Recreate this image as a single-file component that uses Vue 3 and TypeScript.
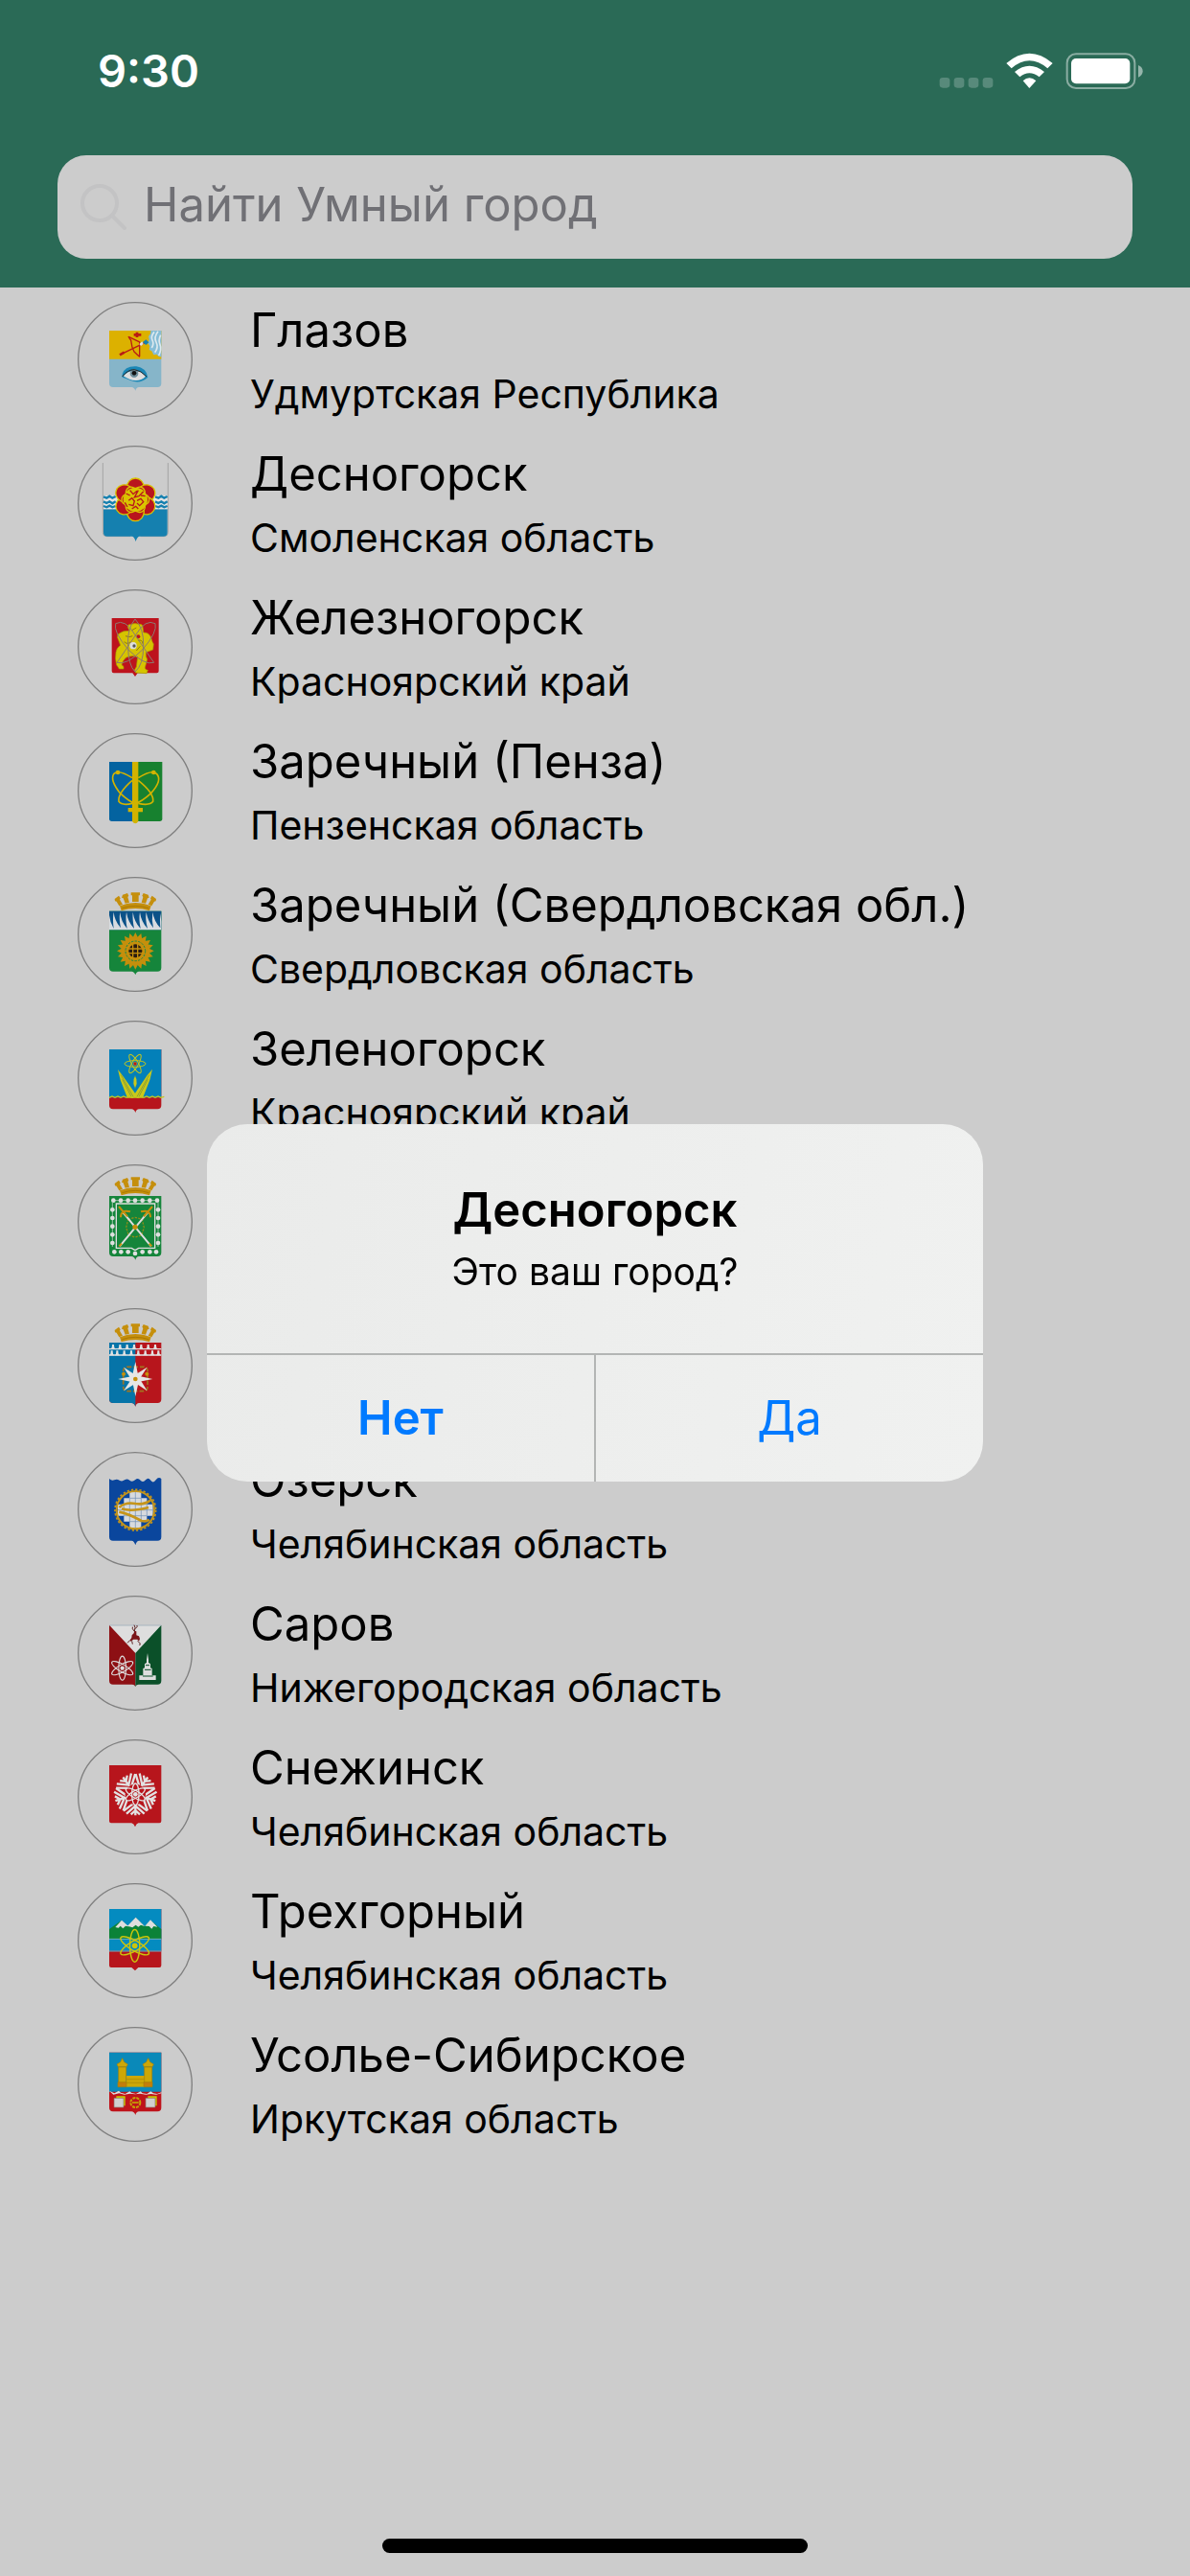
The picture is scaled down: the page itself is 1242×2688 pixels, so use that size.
<script setup lang="ts">
import { ref } from 'vue'

interface City {
  name: string
  region: string
  coat: string
}

const cities: City[] = [
  { name: 'Глазов', region: 'Удмуртская Республика', coat: 'glazov' },
  { name: 'Десногорск', region: 'Смоленская область', coat: 'desnogorsk' },
  { name: 'Железногорск', region: 'Красноярский край', coat: 'zheleznogorsk' },
  { name: 'Заречный (Пенза)', region: 'Пензенская область', coat: 'zarechny-penza' },
  { name: 'Заречный (Свердловская обл.)', region: 'Свердловская область', coat: 'zarechny-ural' },
  { name: 'Зеленогорск', region: 'Красноярский край', coat: 'zelenogorsk' },
  { name: 'Лесной', region: 'Свердловская область', coat: 'lesnoy' },
  { name: 'Новоуральск', region: 'Свердловская область', coat: 'novouralsk' },
  { name: 'Озерск', region: 'Челябинская область', coat: 'ozersk' },
  { name: 'Саров', region: 'Нижегородская область', coat: 'sarov' },
  { name: 'Снежинск', region: 'Челябинская область', coat: 'snezhinsk' },
  { name: 'Трехгорный', region: 'Челябинская область', coat: 'trekhgorny' },
  { name: 'Усолье-Сибирское', region: 'Иркутская область', coat: 'usolye' },
]

const query = ref('')
const confirmOpen = ref(true)

// Evenly spaced angles for the rotated parts of the coats of arms
const turns = (count: number): number[] =>
  Array.from({ length: count }, (_, i) => (360 / count) * i)

// Shield outline with rounded bottom corners and a small point
const shield = (top: number, bottom: number): string =>
  `M99 ${top}H262V${bottom - 12}q0 12 -12 12H192q-8 0 -11 11q-4 -11 -12 -11H111q-12 0 -12 -12Z`
</script>

<template>
  <div class="screen">
    <svg class="defs" aria-hidden="true">
      <symbol id="crown" viewBox="0 0 360 360">
        <g fill="#c58f0c">
          <path d="M132 91q49 -20 98 0l-5 15q-44 -14 -88 0Z" />
          <path d="M167 49h28v9h-4v20h-20v-20h-4Z" />
          <path d="M141 56l15 -5 4 8 -3 4 5 17 -13 3 -6 -16 -5 -2Z" />
          <path d="M221 56l-15 -5 -4 8 3 4 -5 17 13 3 6 -16 5 -2Z" />
          <path d="M116 69l13 -10 5 8 -2 4 9 15 -11 5 -8 -14 -5 -1Z" />
          <path d="M246 69l-13 -10 -5 8 2 4 -9 15 11 5 8 -14 5 -1Z" />
        </g>
        <path d="M139 98q42 -14 84 0" fill="none" stroke="#9a6c00" stroke-width="2" />
      </symbol>
      <symbol id="atom" viewBox="-50 -50 100 100">
        <g fill="none" stroke="currentColor" stroke-width="4">
          <ellipse rx="14" ry="46" />
          <ellipse rx="14" ry="46" transform="rotate(60)" />
          <ellipse rx="14" ry="46" transform="rotate(120)" />
        </g>
        <circle r="8" fill="currentColor" />
      </symbol>
    </svg>

    <header class="header">
      <div class="status">
        <time class="clock">9:30</time>
        <svg class="indicators" viewBox="238 104 640 114" aria-hidden="true">
          <g fill="#fff" fill-opacity=".22">
            <rect v-for="i in 4" :key="i" :x="194 + i * 45" y="182" width="32" height="32" rx="10" />
          </g>
          <g fill="#fff">
            <path d="M448 137Q520 76 593 137L577 153Q520 105 464 153Z" />
            <path d="M474 164Q520 126 567 164L551 180Q520 155 490 180Z" />
            <path d="M500 192Q520 174 541 192L520 215Z" />
          </g>
          <rect x="638" y="108" width="212" height="107" rx="28" fill="none" stroke="#fff" stroke-opacity=".45" stroke-width="6" />
          <rect x="651" y="122" width="184" height="79" rx="15" fill="#fff" />
          <path d="M861 143q14 6 14 19t-14 19Z" fill="#fff" fill-opacity=".5" />
        </svg>
      </div>
      <label class="search">
        <svg class="search-icon" viewBox="0 0 48 48" aria-hidden="true">
          <circle cx="20" cy="20" r="18" />
          <path d="M33 33L46 46" />
        </svg>
        <input v-model="query" type="text" placeholder="Найти Умный город" aria-label="Найти Умный город" />
      </label>
    </header>

    <ul class="cities">
      <li v-for="city in cities" :key="city.name" class="city">
        <svg class="coat" viewBox="0 0 360 360" aria-hidden="true">
          <circle cx="180" cy="180" r="178" fill="none" stroke="#808080" stroke-width="4" />

          <g v-if="city.coat === 'glazov'">
            <path :d="shield(90, 267)" fill="#86b5c9" />
            <path d="M99 90H262V179H99Z" fill="#dcb100" />
            <path d="M229 90H262V172H255l-8 -8 -9 2 -6 -12 -8 -4 2 -12 -6 -8 4 -12 -2 -10 6 -8Z" fill="#86bdd6" />
            <path d="M240 94q-12 14 -6 26t-2 24M252 92q-14 18 -6 34t-4 32M260 104q-8 16 -2 30t-4 34" fill="none" stroke="#dde9ef" stroke-width="5" />
            <g fill="none" stroke="#b91c14" stroke-width="4">
              <path d="M159 108q4 8 8 12q2 22 10 36q12 12 18 16M161 110L194 126V170M136 164L212 127" />
              <path d="M186 95v16M176 103h23" stroke-width="8" />
              <path d="M132 166l14 -8" stroke-width="8" />
            </g>
            <path d="M204 126l10 -8 9 9 -9 8Z" fill="#1580ae" />
            <path d="M193 132l9 -8 4 8 -8 6Z" fill="#e4e4e4" />
            <path d="M140 226q8 -26 44 -24q30 4 36 34q-24 22 -54 10q-16 -8 -26 -10Z" fill="#1b87b6" />
            <path d="M143 232q14 -16 36 -17q22 2 34 18q-14 14 -32 13q-18 0 -38 -14Z" fill="#dedede" />
            <circle cx="177" cy="224" r="13" fill="#6f8e9a" />
            <circle cx="177" cy="223" r="7" fill="#111" />
            <path d="M140 234q16 -22 38 -22q20 2 38 22" fill="none" stroke="#222" stroke-width="3" />
          </g>

          <g v-else-if="city.coat === 'desnogorsk'">
            <path d="M79 54V272q0 12 12 12H165M283 54V272q0 12 -12 12H197" fill="none" stroke="#a4a4a4" stroke-width="3" />
            <path d="M81 199H281V272q0 12 -12 12H193q-7 2 -11 16q-4 -14 -11 -16H93q-12 0 -12 -12Z" fill="#1580af" />
            <path d="M81 156H281V199H81Z" fill="#e4e4e4" />
            <g fill="none" stroke="#1580af" stroke-width="7">
              <path d="M81 160l10 4 9 -6 9 6 10 -5M81 175l10 5 9 -5 9 6 10 -6M81 189l10 4 9 -5 9 5 10 -4" />
              <path d="M243 160l10 4 9 -6 9 6 10 -5M243 175l10 5 9 -5 9 6 10 -6M243 189l10 4 9 -5 9 5 10 -4" />
            </g>
            <g fill="#b9151d" stroke="#d9c400" stroke-width="4">
              <ellipse v-for="a in turns(6)" :key="a" cx="181" cy="131" rx="27" ry="29" :transform="`rotate(${a} 181 169)`" />
              <ellipse v-for="a in turns(6)" :key="a + 500" cx="181" cy="141" rx="16" ry="15" :transform="`rotate(${a + 30} 181 169)`" />
            </g>
            <circle cx="181" cy="169" r="38" fill="#d9c400" />
            <path d="M152 150l12 6M164 140l10 12 12 -10M190 140l-12 22 14 -4 14 -14M160 172l10 -8 8 10 -4 14 -14 -4M186 172l12 -6 8 10 -12 12 -8 -8M170 198l12 -8 8 8M198 156l14 2M148 178l8 14" fill="none" stroke="#b9151d" stroke-width="4" />
          </g>

          <g v-else-if="city.coat === 'zheleznogorsk'">
            <path d="M107 90H254V256q0 6 -6 6H188l-8 11 -8 -11H113q-6 0 -6 -6Z" fill="#bd131d" />
            <path d="M157 118q0 -10 10 -8q12 -6 24 -1q12 -2 13 8l2 18q18 0 24 16q4 16 8 20l-2 18 -22 8q-2 14 4 22l-6 22q-4 10 8 12l-4 10 -34 -2q-8 -8 2 -18l4 -32q-18 -6 -36 2q-12 10 -14 24q8 2 6 12h-14q-4 -8 -8 -12q-6 -20 -2 -40q2 -14 14 -22l-6 -16q-6 -8 -2 -18q16 -14 37 -11Z" fill="#d6c400" stroke="#a59a00" stroke-width="2" />
            <path d="M150 146q12 6 22 0M146 164q10 10 20 0M190 160q12 -4 14 10M170 128l14 -8M196 178l-12 14" fill="none" stroke="#8e7c10" stroke-width="3" />
            <circle cx="190" cy="148" r="6" fill="#bd131d" />
            <g fill="none" stroke="#8c7a70" stroke-width="3">
              <path d="M119 107q30 -16 60 34q40 60 60 88q-30 10 -80 -40q-48 -56 -40 -82Z" />
              <path d="M243 107q-30 -16 -60 34q-40 60 -60 88q30 10 80 -40q48 -56 40 -82Z" />
              <path d="M180 93q-26 30 -22 84q0 60 22 81q26 -21 26 -81q2 -54 -26 -84Z" />
            </g>
            <circle cx="174" cy="176" r="11" fill="#ddd" /><circle cx="177" cy="177" r="5" fill="#555" />
          </g>

          <g v-else-if="city.coat === 'zarechny-penza'">
            <path d="M99 90H180V276H107q-8 0 -8 -8Z" fill="#0463a0" />
            <path d="M180 90H265V268q0 8 -8 8H180Z" fill="#17812f" />
            <path d="M171 90H190V234H204V247H190V276q-9 14 -19 0V247H158V234H171Z" fill="#d2b300" />
            <g fill="none" stroke="#d2b300" stroke-width="5">
              <path d="M171 140q-44 -28 -58 -12q-12 20 20 60q30 28 47 32M171 148q-46 40 -42 66q10 14 42 6" />
              <path d="M190 140q44 -28 58 -12q18 20 -18 60q-30 28 -50 32M190 148q50 40 46 66q-10 14 -46 6" />
            </g>
            <circle cx="126" cy="123" r="7" fill="#d2b300" /><circle cx="238" cy="123" r="7" fill="#d2b300" />
          </g>

          <g v-else-if="city.coat === 'zarechny-ural'">
            <use href="#crown" width="360" height="360" />
            <path :d="shield(107, 296)" fill="#15853b" />
            <path d="M99 107H262V166H99Z" fill="#0b5288" />
            <path d="M99 166V120q2 20 14 42q-4 -30 0 -52q2 26 22 50q-6 -28 -2 -50q2 28 22 52q-6 -30 -2 -52q4 30 24 52q-6 -30 -4 -52q4 30 24 52q-6 -30 -2 -52q4 30 24 52q-8 -30 -4 -52q4 26 22 50q-6 -26 -2 -50q4 28 24 50q-2 -30 0 -46q2 20 3 26V166Z" fill="#d8dce0" />
            <g fill="#c58f0c">
              <path v-for="a in turns(20)" :key="a" d="M172 192L181 174L190 192Z" :transform="`rotate(${a} 181 232)`" />
              <circle cx="181" cy="232" r="43" />
            </g>
            <circle cx="181" cy="232" r="31" fill="none" stroke="#158a4b" stroke-width="3" stroke-dasharray="7 4" />
            <circle cx="181" cy="232" r="21" fill="#2a1c10" />
            <path d="M158 225h46M158 239h46M173 209v46M188 209v46" stroke="#c58f0c" stroke-width="4" />
          </g>

          <g v-else-if="city.coat === 'zelenogorsk'">
            <path :d="shield(90, 277)" fill="#b7151c" />
            <path d="M99 90H262V241H99Z" fill="#0380b9" />
            <path d="M99 241l9 -4 9 4 9 -4 9 4 9 -4 9 4 9 -4 9 4 9 -4 9 4 9 -4 9 4 9 -4 9 4 9 -4 9 4 9 -4 9 4 10 -3" fill="none" stroke="#c9c81a" stroke-width="4" />
            <path d="M126 153l14 18 40 56 38 -56 16 -19 -8 34 -22 56H156l-22 -56Z" fill="#c9c81a" />
            <path d="M180 170q-8 14 -6 28l6 16 6 -16q2 -14 -6 -28Z" fill="#c9c81a" stroke="#0380b9" stroke-width="2" />
            <path d="M136 170l38 68M140 184l28 54M224 170l-38 68M220 184l-28 54" stroke="#718f3e" stroke-width="2" />
            <use href="#atom" x="144" y="99" width="72" height="72" color="#c9c81a" transform="rotate(30 180 135)" />
            <circle cx="180" cy="135" r="5" fill="#b7151c" />
          </g>

          <g v-else-if="city.coat === 'lesnoy'">
            <use href="#crown" y="-9" width="360" height="360" />
            <path :d="shield(99, 288)" fill="#15853b" />
            <path d="M121 123H242V262H191l-11 7 -11 -7H121Z" fill="none" stroke="#dedede" stroke-width="4" />
            <g fill="#e0e0e0">
              <circle v-for="x in [112, 135, 158, 180, 203, 226, 249]" :key="x" :cx="x" cy="113" r="7" />
              <circle v-for="x in [115, 136, 158, 180, 203, 226, 246]" :key="x + 300" :cx="x" :cy="x === 180 ? 279 : 274" r="7" />
              <g v-for="y in [142, 168, 194, 220, 246]" :key="y">
                <circle cx="109" :cy="y" r="7" /><circle cx="252" :cy="y" r="7" />
              </g>
            </g>
            <path d="M109 120V258M252 120V258M112 113H249" stroke="#e0e0e0" stroke-width="2" />
            <path d="M158 172l22 -6 22 6 6 26 -8 24 -20 6 -20 -6 -8 -24Z" fill="none" stroke="#8c8d18" stroke-width="4" stroke-dasharray="7 4" />
            <path d="M142 150L230 256M220 150L132 256" stroke="#dedede" stroke-width="6" />
            <path d="M129 132L156 163M234 132L207 163M135 166q0 -12 6 -16q6 -6 24 -2M228 166q0 -12 -6 -16q-6 -6 -24 -2M224 248l8 8M138 248l-8 8" fill="none" stroke="#c58f0c" stroke-width="6" />
            <circle cx="180" cy="196" r="8" fill="#c58f0c" />
          </g>

          <g v-else-if="city.coat === 'novouralsk'">
            <use href="#crown" width="360" height="360" />
            <path :d="shield(108, 297)" fill="#b7151c" />
            <path d="M99 108H181V308q-4 -11 -12 -11H111q-12 0 -12 -12Z" fill="#0674a8" />
            <g fill="#e2e2e2">
              <path v-for="x in [103, 125, 147, 169, 191, 213, 235]" :key="x" :d="`M${x} 128q5 -2 5 -14h6q0 12 5 14Z`" />
              <path v-for="x in [99, 116, 138, 160, 182, 204, 226, 245]" :key="x + 400" :d="`M${x} 148q5 -2 5 -15h6q0 13 5 15Z`" />
              <path d="M99 126H262V130H99ZM99 145H262V149H99Z" />
            </g>
            <rect x="143" y="184" width="76" height="76" rx="12" fill="none" stroke="#a1741f" stroke-width="5" stroke-dasharray="14 6" />
            <g fill="#e6e6e6">
              <path v-for="a in turns(4)" :key="a" d="M171 213L181 168L190 213L181 222Z" :transform="`rotate(${a} 181 222)`" />
              <path v-for="a in turns(4)" :key="a + 45" d="M171 213L181 170L190 213L181 222Z" :transform="`rotate(${a + 45} 181 222)`" />
              <circle cx="181" cy="222" r="15" />
            </g>
            <circle cx="181" cy="222" r="7" fill="#c58f0c" /><circle cx="144" cy="206" r="6" fill="#c58f0c" /><circle cx="217" cy="206" r="6" fill="#c58f0c" />
          </g>

          <g v-else-if="city.coat === 'ozersk'">
            <path d="M99 84q8 8 16 4t16 1t16 -1t16 1t17 -1t17 1t16 -1t16 1t16 -1t17 -4V266q0 12 -12 12H193q-9 0 -12 14q-4 -14 -12 -14H111q-12 0 -12 -12Z" fill="#0a469d" />
            <path d="M163 125h36v20h18v19h19v36h-19v18h-18v21h-36v-21h-18v-18h-19v-36h19v-19h18Z" fill="#d7dade" />
            <path d="M126 182h110M145 164h72M145 200h72M163 145h36M163 218h36M181 125v114M163 145v75M199 145v75M145 164v36M217 164v36" stroke="#6c8cb4" stroke-width="2" />
            <circle cx="181" cy="182" r="59" fill="none" stroke="#c6951a" stroke-width="6" />
            <circle cx="181" cy="182" r="64" fill="none" stroke="#c6951a" stroke-width="5" stroke-dasharray="7 6" />
            <path d="M130 174q20 -18 52 -12q26 4 46 -10M138 178q30 10 84 -4M130 188q30 6 70 28q16 4 24 -4" fill="none" stroke="#c6951a" stroke-width="8" />
          </g>

          <g v-else-if="city.coat === 'sarov'">
            <path d="M99 92H262L181 184Z" fill="#dedede" />
            <path d="M99 92L181 180V285q-3 -7 -10 -7H111q-12 0 -12 -12Z" fill="#8d1014" />
            <path d="M262 92L181 180V285q3 -7 10 -7H250q12 0 12 -12Z" fill="#0b5029" />
            <path d="M99 93H262" stroke="#8ba0b0" stroke-width="2" />
            <path d="M170 124l6 -6 2 -8 6 2 0 12 8 3 3 8 -3 8 -5 -6 -12 0 -8 6 -4 -3 6 -8Z" fill="#7a1418" />
            <path d="M178 112l-6 -8v-6M178 112l2 -12 -3 -8M180 104l6 -6v-5M164 140l-8 8M170 142l2 10M188 142l8 8 -2 6" fill="none" stroke="#5a2020" stroke-width="3" />
            <use href="#atom" x="99" y="186" width="82" height="82" color="#dedede" />
            <path d="M219 180l3 20v10l6 4v12l5 2v22h12v14h-52v-14h12v-22l5 -2v-12l6 -4v-10Z" fill="#dedede" />
            <path d="M210 232h20M213 218h12M204 252h32" stroke="#0b5029" stroke-width="3" />
          </g>

          <g v-else-if="city.coat === 'snezhinsk'">
            <path d="M99 81H262V256q0 6 -6 6H190q-6 2 -10 12q-4 -10 -11 -12H105q-6 0 -6 -6Z" fill="#b7151c" />
            <g fill="none" stroke="#e2e2e2" stroke-width="7">
              <path v-for="a in turns(5)" :key="a" d="M181 194V238M181 222l-14 13M181 222l14 13M181 208l-28 25M181 208l28 25M181 196l-37 28M181 196l37 28" :transform="`rotate(${a} 181 172)`" />
            </g>
            <circle cx="181" cy="172" r="32" fill="#b7151c" />
            <g fill="none" stroke="#e2e2e2" stroke-width="4">
              <ellipse cx="181" cy="172" rx="11" ry="34" />
              <ellipse cx="181" cy="172" rx="11" ry="34" transform="rotate(60 181 172)" />
              <ellipse cx="181" cy="172" rx="11" ry="34" transform="rotate(120 181 172)" />
            </g>
            <circle cx="181" cy="172" r="7" fill="#e2e2e2" />
          </g>

          <g v-else-if="city.coat === 'trekhgorny'">
            <path d="M99 81H262V258q0 6 -6 6H190l-10 10 -11 -10H105q-6 0 -6 -6Z" fill="#b7151c" />
            <path d="M99 81H262V212H99Z" fill="#048bc0" />
            <path d="M99 144L136 118L158 136L182 108L210 136L228 116L262 144V175H99Z" fill="#0b8238" />
            <path d="M118 138l20 -22 22 20 -10 -2 -8 8 -8 -8 -6 6ZM156 134l26 -27 28 28 -12 -4 -8 6 -8 -6 -10 8ZM211 134l17 -19 22 22 -12 -2 -6 8 -8 -8Z" fill="#dedede" />
            <path d="M99 175H262M99 213H262" stroke="#6fabc4" stroke-width="3" />
            <use href="#atom" x="124" y="141" width="110" height="110" color="#ccc50c" />
          </g>

          <g v-else>
            <path :d="shield(80, 265)" fill="#bf131b" />
            <path d="M99 80H262V203H99Z" fill="#0a89b9" />
            <path d="M99 200l16 8 14 -8 6 6 14 4 14 -8 6 5 14 3 14 -8 6 6 14 2 12 -8 8 6 12 2 13 -5V208l-16 4 -16 -2 -16 2 -18 -3 -16 2 -16 -2 -18 3 -16 -4 -18 4Z" fill="#dedede" />
            <path d="M153 153h57v35h-57Z" fill="#cda707" /><path d="M153 164h57M153 175h57" stroke="#a98906" stroke-width="2" />
            <g v-for="x in [140, 221]" :key="x" fill="#cda707" stroke="#a58207" stroke-width="2">
              <path :d="`M${x} 98l6 12 11 7 -4 8h-26l-4 -8 11 -7Z`" />
              <path :d="`M${x - 12} 126h24v50h-24Z`" />
              <path :d="`M${x - 14} 173h27v15h-27Z`" fill="#c47d0c" />
            </g>
            <path d="M121 217h28v30h-28ZM220 217h28v30h-28Z" fill="#c8c900" />
            <path d="M114 223h30v29h-30ZM213 223h30v29h-30Z" fill="#d0d0d0" stroke="#8a6b60" stroke-width="2" />
            <circle cx="181" cy="237" r="15" fill="none" stroke="#c5a207" stroke-width="6" stroke-dasharray="9 3" /><path d="M171 237h20" stroke="#c5a207" stroke-width="5" />
          </g>
        </svg>
        <div class="labels">
          <span class="name">{{ city.name }}</span>
          <span class="region">{{ city.region }}</span>
        </div>
      </li>
    </ul>

    <div class="home-bar"></div>

    <div v-if="confirmOpen" class="overlay">
      <section class="alert" role="alertdialog" aria-labelledby="alert-title" aria-describedby="alert-text">
        <div class="message">
          <h2 id="alert-title">Десногорск</h2>
          <p id="alert-text">Это ваш город?</p>
        </div>
        <div class="actions">
          <button type="button" class="cancel" @click="confirmOpen = false">Нет</button>
          <button type="button" @click="confirmOpen = false">Да</button>
        </div>
      </section>
    </div>
  </div>
</template>

<style>
body {
  margin: 0;
  background: #ccc;
}
</style>

<style scoped>
.screen {
  display: flex;
  flex-direction: column;
  min-height: 100vh;
  background: #ccc;
  color: #000;
  font-family: Inter, "Liberation Sans", sans-serif;
}

.defs {
  position: absolute;
  width: 0;
  height: 0;
}

.header {
  padding: 0 60px 30px;
  background: #2a6a56;
}

.status {
  display: flex;
  align-items: center;
  justify-content: space-between;
  height: 132px;
  margin-bottom: 30px;
  padding-left: 42px;
  padding-top: 16px;
  margin-right: -12px;
  box-sizing: border-box;
}

.clock {
  color: #fff;
  font-size: 47px;
  font-weight: 600;
  line-height: 60px;
}

.indicators {
  width: 214px;
  height: 38px;
}

.search {
  display: flex;
  align-items: center;
  gap: 18px;
  height: 108px;
  padding: 0 24px;
  border-radius: 30px;
  box-sizing: border-box;
  background: #ccc;
}

.search-icon {
  flex: none;
  width: 48px;
  height: 48px;
  fill: none;
  stroke: #c3c3c4;
  stroke-width: 4;
  stroke-linecap: round;
}

.search input {
  flex: 1;
  min-width: 0;
  padding: 0 0 4px;
  border: 0;
  outline: 0;
  background: transparent;
  color: #000;
  font: inherit;
  font-size: 49px;
  line-height: 60px;
}

.search input::placeholder {
  color: #707075;
  opacity: 1;
}

.cities {
  margin: 0;
  padding: 0;
  list-style: none;
}

.city {
  display: flex;
  align-items: center;
  gap: 60px;
  height: 150px;
  padding: 0 81px;
}

.coat {
  flex: none;
  width: 120px;
  height: 120px;
}

.labels {
  display: flex;
  flex-direction: column;
  gap: 12px;
}

.name {
  font-size: 49px;
  line-height: 60px;
}

.region {
  font-size: 41px;
  line-height: 48px;
}

.home-bar {
  width: 444px;
  height: 15px;
  margin: auto auto 24px;
  border-radius: 8px;
  background: #000;
}

.overlay {
  position: fixed;
  inset: 0;
  display: flex;
  align-items: center;
  justify-content: center;
  padding-top: 30px;
}

.alert {
  width: 810px;
  overflow: hidden;
  border-radius: 42px;
  background: linear-gradient(100deg, #eaebea, #f0f1f0);
}

.message {
  padding: 60px 48px 58px;
  text-align: center;
}

.message h2 {
  margin: 0 0 7px;
  font-size: 49px;
  font-weight: 600;
  line-height: 60px;
}

.message p {
  margin: 0;
  font-size: 39px;
  line-height: 54px;
}

.actions {
  display: flex;
  border-top: 2px solid #b3b5b4;
}

.actions button {
  flex: 1;
  height: 132px;
  padding: 0;
  border: 0;
  background: transparent;
  color: #007aff;
  font: inherit;
  font-size: 49px;
}

.actions .cancel {
  border-right: 2px solid #b3b5b4;
  font-weight: 600;
}
</style>
